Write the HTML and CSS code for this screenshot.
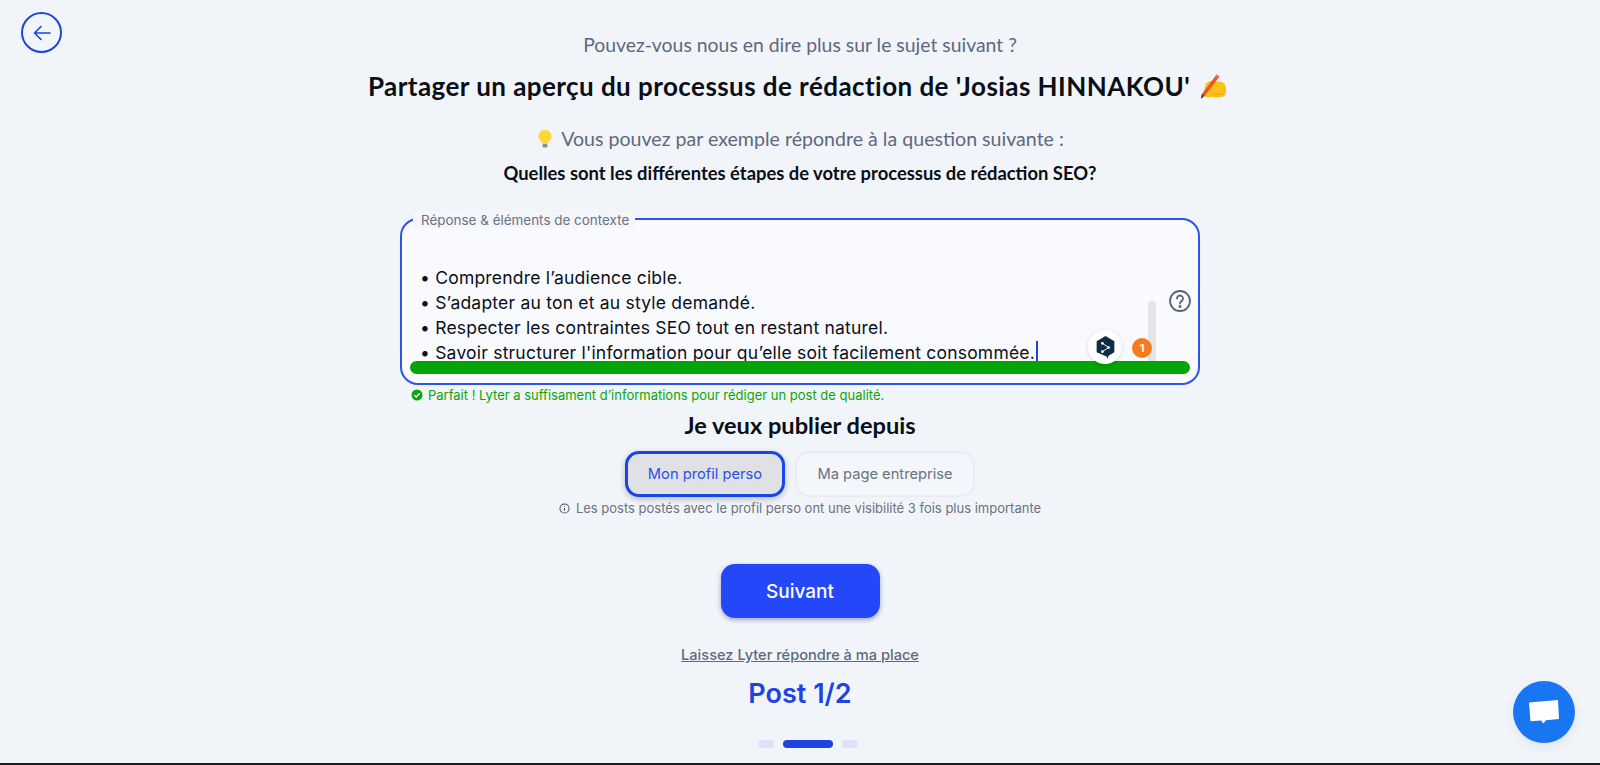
FILE: index.html
```html
<!DOCTYPE html>
<html lang="fr">
<head>
<meta charset="utf-8">
<title>Lyter</title>
<link rel="stylesheet" href="styles.css">
</head>
<body>
<a class="back" href="#" aria-label="Retour">
  <svg viewBox="0 0 24 24" width="24" height="24" fill="none" stroke="currentColor" stroke-width="1.6" stroke-linecap="round" stroke-linejoin="round"><path d="M20 12H4.500M11 5.500 4.500 12l6.500 6.500"/></svg>
</a>
<main class="page">
  <p class="subtitle">Pouvez-vous nous en dire plus sur le sujet suivant ?</p>
  <h1 class="title">Partager un aperçu du processus de rédaction de 'Josias HINNAKOU'
    <svg class="title-emoji" viewBox="0 0 28 26" width="29" height="27"><path d="M8 10c3-3 6-3 9-2 3 0 7 0 9 3 1.500 3 1.500 8 0 11-3 2-8 2-13 1-3 1-6 .5-8-1 2-4 1-9 3-12z" fill="#fcc21b"/><path d="M14 21c3-1 7-1 10 0" stroke="#f2a600" stroke-width="1.200" fill="none"/><path d="M18 1.500l2.800 1.800L6.500 22l-2.800-1.800z" fill="#f4511e"/><path d="M18 1.500l2.800 1.800-1.400 1.900-2.800-1.800z" fill="#e57373"/><path d="M3.700 20.200l2.800 1.800-3.800 3z" fill="#3b3b3b"/></svg>
  </h1>
  <p class="hint">
    <svg class="bulb" viewBox="0 0 14 18" width="14" height="18"><path d="M7 0a6.500 6.500 0 0 0-4 11.600c.9.800 1.200 1.600 1.200 2.400h5.600c0-.8.300-1.600 1.200-2.400A6.500 6.500 0 0 0 7 0z" fill="#fdd835"/><rect x="4.500" y="14" width="5" height="3.500" rx="1" fill="#8a8f9c"/></svg>
    Vous pouvez par exemple répondre à la question suivante :
  </p>
  <p class="question">Quelles sont les différentes étapes de votre processus de rédaction SEO?</p>

  <section class="answer">
    <span class="answer-label">Réponse &amp; éléments de contexte</span>
    <div class="answer-text">
      <div>• Comprendre l’audience cible.</div>
      <div>• S’adapter au ton et au style demandé.</div>
      <div>• Respecter les contraintes SEO tout en restant naturel.</div>
      <div>• Savoir structurer l'information pour qu’elle soit facilement consommée.<span class="caret"></span></div>
    </div>
    <div class="progress"></div>
    <span class="scroll-thumb"></span>
    <svg class="help" viewBox="0 0 24 24" width="24" height="24" fill="none" stroke="#5a6375" stroke-width="1.800" stroke-linecap="round"><circle cx="12" cy="12" r="10"/><path d="M9 9.500a3 3 0 1 1 4.500 2.600c-1 .6-1.500 1.200-1.500 2.400"/><circle cx="12" cy="17.500" r=".6" fill="#5a6375"/></svg>
    <span class="deepl">
      <svg viewBox="0 0 20 24" width="21" height="25"><path d="M10 1l8.500 5v10.500L13 19.800l-1 3-1-2.200L1.500 16.500V6z" fill="#0f2b46"/><path d="M7 8l6 4-6 4" fill="none" stroke="#fff" stroke-width=".9"/><circle cx="7" cy="8" r="1.300" fill="#fff"/><circle cx="7" cy="16" r="1.300" fill="#fff"/><circle cx="13" cy="12" r="1.300" fill="#fff"/></svg>
    </span>
    <span class="badge">1</span>
  </section>

  <p class="success">
    <svg viewBox="0 0 12 12" width="12" height="12"><circle cx="6" cy="6" r="5.500" fill="#0aa50a"/><path d="M3.300 6.200l1.900 1.800 3.500-3.700" fill="none" stroke="#fff" stroke-width="1.400"/></svg>
    Parfait ! Lyter a suffisament d’informations pour rédiger un post de qualité.
  </p>

  <h2 class="publish-title">Je veux publier depuis</h2>
  <div class="choices">
    <button class="choice choice-active">Mon profil perso</button>
    <button class="choice">Ma page entreprise</button>
  </div>
  <p class="note">
    <svg viewBox="0 0 12 12" width="11" height="11" fill="none" stroke="#4b5568" stroke-width="1.100"><circle cx="6" cy="6" r="5"/><path d="M6 5.500v3M6 3.300v.9"/></svg>
    Les posts postés avec le profil perso ont une visibilité 3 fois plus importante
  </p>

  <button class="next">Suivant</button>
  <a class="skip" href="#">Laissez Lyter répondre à ma place</a>
  <div class="post-count">Post 1/2</div>
  <div class="dots">
    <span class="dot"></span>
    <span class="dot dot-active"></span>
    <span class="dot"></span>
  </div>
</main>
<a class="chat" href="#" aria-label="Chat">
  <svg viewBox="0 0 32 26" width="32" height="26"><path d="M1 3.500 30 1l1 19-13 1.200-2.500 3.300-2.500-3-10.500.8z" fill="#fff"/></svg>
</a>
</body>
</html>
```
FILE: styles.css
```css
* { box-sizing: border-box; }
html, body { height: 100%; }
body {
  margin: 0;
  height: 765px;
  overflow: hidden;
  background: #f1f5f9;
  border-bottom: 2px solid #1a1a1a;
  font-family: "Inter", "Liberation Sans", sans-serif;
  color: #0b0f19;
  position: relative;
}
p, h1, h2 { margin: 0; }

.back {
  position: absolute;
  left: 21px;
  top: 12px;
  width: 41px;
  height: 41px;
  border: 2px solid #1d44e0;
  border-radius: 50%;
  color: #1d44e0;
  display: flex;
  align-items: center;
  justify-content: center;
}

.page {
  display: flex;
  flex-direction: column;
  align-items: center;
  padding-top: 33px;
}

.subtitle {
  font-family: "Lato", sans-serif;
  font-size: 19.400px;
  line-height: 24px;
  color: #5f6880;
}
.title {
  margin: 13px 5px 0 0;
  font-family: "Lato", sans-serif;
  font-weight: 700;
  font-size: 26px;
  line-height: 32px;
  letter-spacing: .44px;
  color: #0a0e17;
  display: flex;
  align-items: center;
  gap: 8px;
}
.hint {
  margin: 25px 0 0 2px;
  font-family: "Lato", sans-serif;
  font-size: 19.600px;
  line-height: 24px;
  color: #5f6880;
  display: flex;
  align-items: center;
  gap: 9px;
}
.question {
  margin-top: 11px;
  font-family: "Lato", sans-serif;
  font-weight: 700;
  font-size: 18.400px;
  line-height: 22px;
  color: #0a0e17;
}

.answer {
  position: relative;
  margin-top: 34px;
  width: 800px;
  height: 167px;
  border: 2px solid #2d54ea;
  border-radius: 18px;
  background: #f8fafe;
  padding: 0 8px;
}
.answer-label {
  position: absolute;
  left: 11px;
  top: -8px;
  padding: 0 6px 0 8px;
  background: #f3f6fb;
  font-size: 13.450px;
  line-height: 16px;
  color: #6b7280;
}
.answer-text {
  height: 141px;
  padding: 45px 0 0 10px;
  overflow: hidden;
  font-size: 17.500px;
  line-height: 25px;
  letter-spacing: .21px;
  color: #0b0f19;
}
.caret {
  display: inline-block;
  width: 2px;
  height: 22px;
  margin-left: 1px;
  vertical-align: -4px;
  background: #1d44e0;
}
.progress {
  height: 13px;
  border-radius: 7px;
  background: #03a403;
}
.scroll-thumb {
  position: absolute;
  left: 746px;
  top: 81px;
  width: 8px;
  height: 60px;
  border-radius: 4px 4px 0 0;
  background: #e2e4e8;
}
.help {
  position: absolute;
  left: 766px;
  top: 69px;
}
.deepl {
  position: absolute;
  left: 686px;
  top: 110px;
  width: 34px;
  height: 34px;
  border-radius: 50%;
  background: #fff;
  box-shadow: 0 1px 4px rgba(0, 0, 0, .15);
  display: flex;
  align-items: center;
  justify-content: center;
}
.badge {
  position: absolute;
  left: 730px;
  top: 118px;
  width: 20px;
  height: 20px;
  border-radius: 50%;
  background: #f57c1f;
  color: #fff;
  font-size: 11px;
  font-weight: 700;
  line-height: 20px;
  text-align: center;
}

.success {
  align-self: flex-start;
  margin: 2px 0 0 411px;
  display: flex;
  align-items: center;
  gap: 5px;
  font-size: 13px;
  line-height: 16px;
  color: #0aa50a;
}

.publish-title {
  margin-top: 8px;
  font-family: "Lato", sans-serif;
  font-weight: 700;
  font-size: 23.600px;
  line-height: 28px;
  color: #0a0e17;
}
.choices {
  margin-top: 12px;
  display: flex;
  gap: 10px;
}
.choice {
  height: 46px;
  border: 2px solid #e9ecf2;
  border-radius: 14px;
  background: #f3f6fa;
  font-family: "Inter", sans-serif;
  font-size: 14.700px;
  color: #6b7280;
  width: 180px;
  padding: 0;
}
.choice-active {
  width: 160px;
  border: 3px solid #1745e6;
  background: #e0e1e5;
  color: #2a4fe6;
  box-shadow: 0 2px 6px rgba(0, 0, 0, .25);
}
.note {
  margin-top: 3px;
  display: flex;
  align-items: center;
  gap: 6px;
  font-size: 13px;
  line-height: 16px;
  color: #6b7280;
}

.next {
  margin-top: 48px;
  width: 159px;
  height: 54px;
  border: 0;
  border-radius: 14px;
  background: #2447f9;
  color: #fff;
  font-family: "Inter", sans-serif;
  font-size: 19px;
  font-weight: 500;
  padding-top: 2px;
  box-shadow: 0 2px 5px rgba(30, 50, 120, .4);
}
.skip {
  margin-top: 27px;
  font-size: 14.600px;
  font-weight: 500;
  line-height: 20px;
  color: #5f6880;
  text-decoration: underline;
}
.post-count {
  margin-top: 10px;
  font-size: 27px;
  font-weight: 600;
  line-height: 38px;
  color: #1d44e0;
}
.dots {
  margin: 27px 0 0 16px;
  display: flex;
  gap: 9px;
}
.dot {
  width: 16px;
  height: 8px;
  border-radius: 4px;
  background: #dfe2f6;
}
.dot-active {
  width: 50px;
  background: #1d44e0;
}

.chat {
  position: absolute;
  left: 1513px;
  top: 681px;
  width: 62px;
  height: 62px;
  border-radius: 50%;
  background: #1976f2;
  display: flex;
  align-items: center;
  justify-content: center;
  box-shadow: 0 4px 12px rgba(30, 60, 120, .08);
}
```
